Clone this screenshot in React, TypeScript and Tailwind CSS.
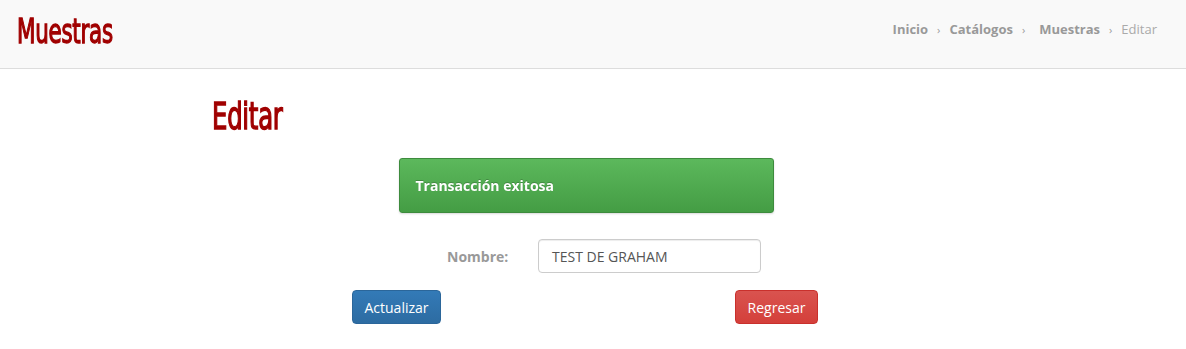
import React from "react";

const condensed = { fontFamily: '"DejaVu Sans Condensed", "Liberation Sans", sans-serif' };

export default function App() {
  return (
    <div className="min-h-[349px] bg-white" style={{ fontFamily: '"Open Sans", "Noto Sans", sans-serif' }}>
      <header className="h-[69px] bg-[#f9f9f9] border-b border-[#dddddd] flex items-center justify-between pl-[17px] pr-[29px]">
        <h1 className="text-[#a00000] text-[29px] leading-none tracking-[-0.3px] scale-x-[0.82] scale-y-[1.16] origin-left mt-[-6px] [-webkit-text-stroke:1.1px_#a00000]" style={condensed}>
          Muestras
        </h1>
        <nav className="flex items-center text-[13px] text-[#999999] mt-[-8px]">
          <span className="font-bold">Inicio</span>
          <span className="mx-[9px] text-[11px]">›</span>
          <span className="font-bold">Catálogos</span>
          <span className="mx-[9px] pr-[5px] text-[11px]">›</span>
          <span className="font-bold">Muestras</span>
          <span className="mx-[9px] text-[11px]">›</span>
          <span className="text-[#aaaaaa]">Editar</span>
        </nav>
      </header>
      <div className="pl-[212px] pt-[29px]">
        <h2 className="text-[#a00000] text-[33px] leading-none tracking-[-0.3px] scale-x-[0.82] scale-y-[1.12] origin-top-left [-webkit-text-stroke:1.2px_#a00000]" style={condensed}>
          Editar
        </h2>
      </div>
      <div className="flex justify-center mt-[27px] ml-[-14px]">
        <div className="w-[375px] h-[55px] rounded-[3px] bg-gradient-to-b from-[#5cb85c] to-[#449d44] border border-[#3d8b3d] shadow-[0_1px_2px_rgba(0,0,0,0.15)] flex items-center pl-[16px]">
          <span className="text-white font-bold text-[14px] drop-shadow-[0_-1px_0_rgba(0,0,0,0.2)]">Transacción exitosa</span>
        </div>
      </div>
      <div className="flex items-center mt-[26px] pl-[447px]">
        <label className="text-[#999999] font-bold text-[14px] w-[91px]">Nombre:</label>
        <div className="w-[223px] h-[34px] border border-[#cccccc] rounded-[4px] bg-white shadow-[inset_0_1px_1px_rgba(0,0,0,0.075)] flex items-center pl-[13px] text-[14px] text-[#555555]">
          TEST DE GRAHAM
        </div>
      </div>
      <div className="flex justify-between mt-[17px] pl-[352px] pr-[368px]">
        <button className="h-[34px] w-[89px] rounded-[4px] bg-gradient-to-b from-[#337ab7] to-[#2d6ca2] border border-[#2b669a] text-white text-[14px]">
          Actualizar
        </button>
        <button className="h-[34px] w-[83px] rounded-[4px] bg-gradient-to-b from-[#d9534f] to-[#d43f3a] border border-[#c9302c] text-white text-[14px]">
          Regresar
        </button>
      </div>
    </div>
  );
}
